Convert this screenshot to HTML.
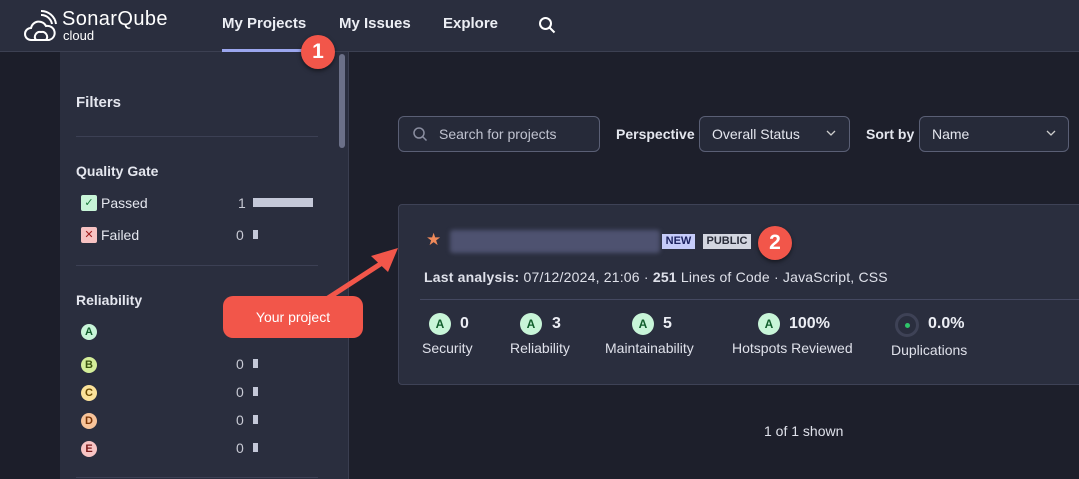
<!DOCTYPE html>
<html><head><meta charset="utf-8"><style>
*{box-sizing:border-box;margin:0;padding:0}
body{width:1079px;height:479px;overflow:hidden;background:#1d1f2b;font-family:"Liberation Sans",sans-serif;color:#e4e6ee;position:relative}
.abs{position:absolute}
.hdr{left:0;top:0;width:1079px;height:52px;background:#2a2e3e;border-bottom:1px solid #3c4052}
.nav{top:15px;font-size:15px;font-weight:bold;color:#eceef4}
.side{left:60px;top:52px;width:289px;height:427px;background:#2a2e3e;border-right:1px solid #3a3e50}
.lbl{font-size:14px;color:#e4e6ee}
.h{font-weight:bold;font-size:14px}
.line{height:1px;background:#3c4054}
.bar{height:9px;background:#c4c8d8}
.circ{width:16px;height:16px;border-radius:50%;font-size:11px;font-weight:bold;text-align:center;line-height:16px}
.inp{border:1px solid #5a5f75;border-radius:6px;background:#262a39;height:36px;font-size:14px;padding-left:12px;line-height:34px;color:#e4e6ee}
.card{left:398px;top:204px;width:690px;height:181px;background:#2a2e3e;border:1px solid #3e4256;border-radius:4px}
.ga{width:22px;height:22px;border-radius:50%;background:#c8f5d8;color:#115e2c;font-weight:bold;font-size:12px;text-align:center;line-height:22px}
.num{font-size:16px;font-weight:bold;color:#eceef4}
.ml{font-size:14px;color:#dfe1ea}
.badge{width:34px;height:34px;border-radius:50%;background:#f2564a;color:#fff;font-size:21px;font-weight:bold;text-align:center;line-height:34px;box-shadow:0 2px 4px rgba(0,0,0,.5)}
</style></head><body>
<div class="abs hdr"></div>
<svg class="abs" style="left:23px;top:10px" width="36" height="34" viewBox="0 0 36 34" fill="none" stroke="#fff" stroke-width="2"><path d="M8 30a6 6 0 0 1 0-12a8 8 0 0 1 15-2a7 7 0 0 1 3 14z"/><path d="M13 30a5 5 0 0 1 5-8a5 5 0 0 1 5 8"/><path d="M18 5a11 11 0 0 1 11 9M18 1a15 15 0 0 1 15 13"/></svg>
<div class="abs" style="left:62px;top:8px;font-size:20px;color:#fff;letter-spacing:0.4px">SonarQube</div>
<div class="abs" style="left:63px;top:28px;font-size:13px;color:#fff;font-weight:normal">cloud</div>
<div class="abs nav" style="left:222px">My Projects</div>
<div class="abs" style="left:222px;top:49px;width:88px;height:3px;background:#9ba6ee"></div>
<div class="abs nav" style="left:339px">My Issues</div>
<div class="abs nav" style="left:443px">Explore</div>
<svg class="abs" style="left:538px;top:16px" width="18" height="18" viewBox="0 0 18 18" fill="none" stroke="#fff" stroke-width="2"><circle cx="7.5" cy="7.5" r="5.5"/><path d="M11.5 11.5l5 5"/></svg>
<div class="abs" style="left:0;top:52px;width:60px;height:427px;background:#1c1e2a"></div>
<div class="abs side"></div>
<div class="abs" style="left:339px;top:54px;width:6px;height:94px;border-radius:3px;background:#6b7088"></div>
<div class="abs" style="left:76px;top:94px;font-size:15px;font-weight:bold">Filters</div>
<div class="abs line" style="left:76px;top:136px;width:242px"></div>
<div class="abs h" style="left:76px;top:163px">Quality Gate</div>
<div class="abs" style="left:81px;top:195px;width:16px;height:16px;border-radius:2px;background:#c8f5d8;color:#1a7a3a;font-size:11px;text-align:center;line-height:16px">✓</div>
<div class="abs lbl" style="left:101px;top:195px">Passed</div>
<div class="abs lbl" style="left:238px;top:195px;color:#c8cad4">1</div>
<div class="abs bar" style="left:253px;top:198px;width:60px"></div>
<div class="abs" style="left:81px;top:227px;width:16px;height:16px;border-radius:2px;background:#f7c2c2;color:#a01c1c;font-size:11px;text-align:center;line-height:16px">✕</div>
<div class="abs lbl" style="left:101px;top:227px">Failed</div>
<div class="abs lbl" style="left:236px;top:227px;color:#c8cad4">0</div>
<div class="abs bar" style="left:253px;top:230px;width:5px"></div>
<div class="abs line" style="left:76px;top:265px;width:242px"></div>
<div class="abs h" style="left:76px;top:292px">Reliability</div>
<div class="abs circ" style="left:81px;top:324px;background:#c8f5d8;color:#115e2c">A</div>
<div class="abs circ" style="left:81px;top:357px;background:#d4ee9a;color:#3b5410">B</div>
<div class="abs circ" style="left:81px;top:385px;background:#fbe29a;color:#6b4a00">C</div>
<div class="abs circ" style="left:81px;top:413px;background:#f8c49a;color:#7a3405">D</div>
<div class="abs circ" style="left:81px;top:441px;background:#f8c4c4;color:#7a1a1a">E</div>
<div class="abs lbl" style="left:236px;top:356px;color:#c8cad4">0</div><div class="abs bar" style="left:253px;top:359px;width:5px"></div>
<div class="abs lbl" style="left:236px;top:384px;color:#c8cad4">0</div><div class="abs bar" style="left:253px;top:387px;width:5px"></div>
<div class="abs lbl" style="left:236px;top:412px;color:#c8cad4">0</div><div class="abs bar" style="left:253px;top:415px;width:5px"></div>
<div class="abs lbl" style="left:236px;top:440px;color:#c8cad4">0</div><div class="abs bar" style="left:253px;top:443px;width:5px"></div>
<div class="abs line" style="left:76px;top:477px;width:242px"></div>

<div class="abs inp" style="left:398px;top:116px;width:202px;padding-left:40px;color:#c0c3d0">Search for projects</div>
<svg class="abs" style="left:412px;top:126px" width="16" height="16" viewBox="0 0 16 16" fill="none" stroke="#8a8ea0" stroke-width="1.5"><circle cx="7" cy="7" r="5"/><path d="M10.5 10.5l4 4"/></svg>
<div class="abs h" style="left:616px;top:126px">Perspective</div>
<div class="abs inp" style="left:699px;top:116px;width:151px">Overall Status</div>
<svg class="abs" style="left:826px;top:130px" width="10" height="7" viewBox="0 0 10 7" fill="none" stroke="#ccc" stroke-width="1.3"><path d="M1 1l4 4l4-4"/></svg>
<div class="abs h" style="left:866px;top:126px">Sort by</div>
<div class="abs inp" style="left:919px;top:116px;width:150px">Name</div>
<svg class="abs" style="left:1046px;top:130px" width="10" height="7" viewBox="0 0 10 7" fill="none" stroke="#ccc" stroke-width="1.3"><path d="M1 1l4 4l4-4"/></svg>

<div class="abs card"></div>
<div class="abs" style="left:426px;top:230px;font-size:17px;color:#f08a5a">★</div>
<div class="abs" style="left:450px;top:230px;width:210px;height:23px;background:#4e5270;filter:blur(2px);border-radius:3px"></div>
<div class="abs" style="left:662px;top:234px;width:33px;height:15px;background:#c6ccfa;color:#1c2260;font-size:11px;font-weight:bold;text-align:center;line-height:15px">NEW</div>
<div class="abs" style="left:703px;top:234px;width:48px;height:15px;background:#d3d6e0;color:#2a2d3a;font-size:11px;font-weight:bold;text-align:center;line-height:15px">PUBLIC</div>
<div class="abs" style="left:424px;top:269px;font-size:14px;color:#dfe1ea;letter-spacing:0.2px"><b>Last analysis:</b> 07/12/2024, 21:06 · <b>251</b> Lines of Code · JavaScript, CSS</div>
<div class="abs line" style="left:420px;top:299px;width:659px;background:#444860"></div>
<div class="abs ga" style="left:429px;top:313px">A</div><div class="abs num" style="left:460px;top:315px">0</div><div class="abs ml" style="left:422px;top:340px">Security</div>
<div class="abs ga" style="left:520px;top:313px">A</div><div class="abs num" style="left:552px;top:315px">3</div><div class="abs ml" style="left:510px;top:340px">Reliability</div>
<div class="abs ga" style="left:632px;top:313px">A</div><div class="abs num" style="left:663px;top:315px">5</div><div class="abs ml" style="left:605px;top:340px">Maintainability</div>
<div class="abs ga" style="left:758px;top:313px">A</div><div class="abs num" style="left:789px;top:315px">100%</div><div class="abs ml" style="left:732px;top:340px">Hotspots Reviewed</div>
<div class="abs" style="left:895px;top:313px;width:24px;height:24px;border-radius:50%;border:3px solid #3e4256"></div>
<div class="abs" style="left:905px;top:323px;width:5px;height:5px;border-radius:50%;background:#2fc56a"></div>
<div class="abs num" style="left:928px;top:315px">0.0%</div><div class="abs ml" style="left:891px;top:342px">Duplications</div>
<div class="abs" style="left:764px;top:423px;font-size:14px;color:#dfe1ea">1 of 1 shown</div>

<svg class="abs" style="left:0;top:0" width="1079" height="479"><path d="M325 300L382 263" stroke="#f2564a" stroke-width="5"/><path d="M398 248L371 256L388 272z" fill="#f2564a"/></svg>
<div class="abs" style="left:223px;top:296px;width:140px;height:42px;border-radius:10px;background:#f2564a;color:#fff;font-size:14px;text-align:center;line-height:42px">Your project</div>
<div class="abs badge" style="left:301px;top:35px">1</div>
<div class="abs badge" style="left:758px;top:226px">2</div>
</body></html>
